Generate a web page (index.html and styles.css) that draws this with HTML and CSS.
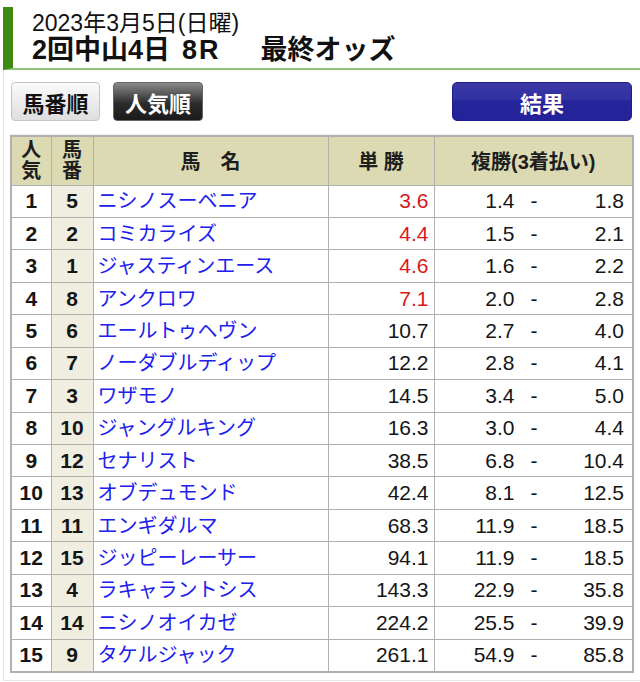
FILE: index.html
```html
<!DOCTYPE html>
<html lang="ja">
<head>
<meta charset="utf-8">
<title>最終オッズ</title>
<link rel="stylesheet" href="styles.css">
</head>
<body>
<div class="head">
  <div class="date">2023年3月5日(日曜)</div>
  <div class="title">2回中山4日<span class="race">8R</span><span class="sub">最終オッズ</span></div>
</div>
<div class="box">
  <div class="btns">
    <span class="btn btn-light">馬番順</span>
    <span class="btn btn-dark">人気順</span>
    <span class="btn btn-blue">結果</span>
  </div>
  <div class="sep"></div>
  <table class="odds">
    <colgroup>
      <col class="c1"><col class="c2"><col class="c3"><col class="c4"><col class="c5">
    </colgroup>
    <thead>
      <tr>
        <th class="stack">人<br>気</th>
        <th class="stack">馬<br>番</th>
        <th>馬　名</th>
        <th>単 勝</th>
        <th>複勝(3着払い)</th>
      </tr>
    </thead>
    <tbody>
      <tr><td class="rank">1</td><td class="num">5</td><td class="name">ニシノスーベニア</td><td class="win red">3.6</td><td class="place"><div class="pl"><span class="lo">1.4</span><span class="dash">-</span><span class="hi">1.8</span></div></td></tr>
      <tr><td class="rank">2</td><td class="num">2</td><td class="name">コミカライズ</td><td class="win red">4.4</td><td class="place"><div class="pl"><span class="lo">1.5</span><span class="dash">-</span><span class="hi">2.1</span></div></td></tr>
      <tr><td class="rank">3</td><td class="num">1</td><td class="name">ジャスティンエース</td><td class="win red">4.6</td><td class="place"><div class="pl"><span class="lo">1.6</span><span class="dash">-</span><span class="hi">2.2</span></div></td></tr>
      <tr><td class="rank">4</td><td class="num">8</td><td class="name">アンクロワ</td><td class="win red">7.1</td><td class="place"><div class="pl"><span class="lo">2.0</span><span class="dash">-</span><span class="hi">2.8</span></div></td></tr>
      <tr><td class="rank">5</td><td class="num">6</td><td class="name">エールトゥヘヴン</td><td class="win">10.7</td><td class="place"><div class="pl"><span class="lo">2.7</span><span class="dash">-</span><span class="hi">4.0</span></div></td></tr>
      <tr><td class="rank">6</td><td class="num">7</td><td class="name">ノーダブルディップ</td><td class="win">12.2</td><td class="place"><div class="pl"><span class="lo">2.8</span><span class="dash">-</span><span class="hi">4.1</span></div></td></tr>
      <tr><td class="rank">7</td><td class="num">3</td><td class="name">ワザモノ</td><td class="win">14.5</td><td class="place"><div class="pl"><span class="lo">3.4</span><span class="dash">-</span><span class="hi">5.0</span></div></td></tr>
      <tr><td class="rank">8</td><td class="num">10</td><td class="name">ジャングルキング</td><td class="win">16.3</td><td class="place"><div class="pl"><span class="lo">3.0</span><span class="dash">-</span><span class="hi">4.4</span></div></td></tr>
      <tr><td class="rank">9</td><td class="num">12</td><td class="name">セナリスト</td><td class="win">38.5</td><td class="place"><div class="pl"><span class="lo">6.8</span><span class="dash">-</span><span class="hi">10.4</span></div></td></tr>
      <tr><td class="rank">10</td><td class="num">13</td><td class="name">オブデュモンド</td><td class="win">42.4</td><td class="place"><div class="pl"><span class="lo">8.1</span><span class="dash">-</span><span class="hi">12.5</span></div></td></tr>
      <tr><td class="rank">11</td><td class="num">11</td><td class="name">エンギダルマ</td><td class="win">68.3</td><td class="place"><div class="pl"><span class="lo">11.9</span><span class="dash">-</span><span class="hi">18.5</span></div></td></tr>
      <tr><td class="rank">12</td><td class="num">15</td><td class="name">ジッピーレーサー</td><td class="win">94.1</td><td class="place"><div class="pl"><span class="lo">11.9</span><span class="dash">-</span><span class="hi">18.5</span></div></td></tr>
      <tr><td class="rank">13</td><td class="num">4</td><td class="name">ラキャラントシス</td><td class="win">143.3</td><td class="place"><div class="pl"><span class="lo">22.9</span><span class="dash">-</span><span class="hi">35.8</span></div></td></tr>
      <tr><td class="rank">14</td><td class="num">14</td><td class="name">ニシノオイカゼ</td><td class="win">224.2</td><td class="place"><div class="pl"><span class="lo">25.5</span><span class="dash">-</span><span class="hi">39.9</span></div></td></tr>
      <tr><td class="rank">15</td><td class="num">9</td><td class="name">タケルジャック</td><td class="win">261.1</td><td class="place"><div class="pl"><span class="lo">54.9</span><span class="dash">-</span><span class="hi">85.8</span></div></td></tr>
    </tbody>
  </table>
</div>
</body>
</html>
```

FILE: styles.css
```css
* { box-sizing: border-box; }
html, body { margin: 0; padding: 0; background: #fff; }
body {
  font-family: "Liberation Sans", "Noto Sans CJK JP", sans-serif;
  color: #111;
}
.head {
  margin: 7px 0 0 3px;
  height: 63px;
  border-left: 10px solid #3c8a12;
  border-bottom: 2px solid #8cc27a;
  padding: 4px 0 0 19px;
}
.date {
  font-size: 23px;
  line-height: 24px;
  height: 24px;
}
.title {
  font-size: 27px;
  line-height: 30px;
  font-weight: bold;
  white-space: nowrap;
}
.title .race { margin-left: 12px; letter-spacing: 2px; }
.title .sub { margin-left: 40px; }

.box {
  margin-left: 3px;
  border-left: 1px solid #e6e6e6;
  border-bottom: 1px solid #e6e6e6;
  padding: 12px 8px 7px 6px;
}
.btns {
  display: flex;
  height: 39px;
  padding-left: 1px;
}
.btn {
  display: flex;
  align-items: center;
  justify-content: center;
  border-radius: 4px;
  font-size: 22px;
  font-weight: bold;
}
.btn-light {
  width: 89px;
  background: linear-gradient(#fbfbfb, #dedede);
  border: 1px solid #c4c4c4;
  color: #111;
}
.btn-dark {
  width: 90px;
  margin-left: 13px;
  background: linear-gradient(#8a8a8a, #2c2c2c 55%, #1a1a1a);
  border: 1px solid #666;
  color: #fff;
}
.btn-blue {
  width: 180px;
  margin-left: auto;
  background: linear-gradient(#3a39a6 0%, #3130a0 45%, #25249a 50%, #24239a 100%);
  border: 1px solid #1c1b88;
  border-radius: 5px;
  color: #fff;
}
.sep {
  margin-top: 13px;
  border-top: 1px solid #f0f0f0;
  height: 1px;
}

.odds {
  width: 622px;
  table-layout: fixed;
  border-collapse: collapse;
  border: 2px solid #b0b0b0;
}
.c1 { width: 40px; }
.c2 { width: 42px; }
.c3 { width: 235px; }
.c4 { width: 106px; }
.c5 { width: 199px; }

.odds th {
  height: 49px;
  background: #dcdab3;
  border: 1px solid #b0b0b0;
  font-size: 20px;
  font-weight: bold;
  color: #1e1e1e;
  text-align: center;
  padding: 0;
  white-space: nowrap;
}
.odds th.stack { line-height: 21px; }
.odds td {
  height: 32.45px;
  border: 1px solid #b0b0b0;
  padding: 0;
  font-size: 21px;
  line-height: 24px;
  white-space: nowrap;
  color: #151515;
}
.rank, .num {
  text-align: center;
  font-weight: bold;
}
.num { background: #efeee0; }
.name {
  padding-left: 4px !important;
  color: #2020ee !important;
  font-size: 20px !important;
}
.win {
  text-align: right;
  padding-right: 5px !important;
}
.red { color: #d81818 !important; }
.pl {
  display: flex;
  padding-right: 8px;
}
.lo { width: 80px; text-align: right; }
.dash { margin-left: 16px; }
.hi { margin-left: auto; }
```
